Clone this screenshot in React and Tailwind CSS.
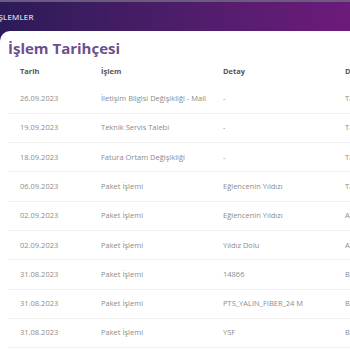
const rows = [
  ["26.09.2023", "İletişim Bilgisi Değişikliği - Mail", "-", "Tamamlandı"],
  ["19.09.2023", "Teknik Servis Talebi", "-", "Tamamlandı"],
  ["18.09.2023", "Fatura Ortam Değişikliği", "-", "Tamamlandı"],
  ["06.09.2023", "Paket İşlemi", "Eğlencenin Yıldızı", "Tamamlandı"],
  ["02.09.2023", "Paket İşlemi", "Eğlencenin Yıldızı", "Aktif"],
  ["02.09.2023", "Paket İşlemi", "Yıldız Dolu", "Aktif"],
  ["31.08.2023", "Paket İşlemi", "14866", "Bitti"],
  ["31.08.2023", "Paket İşlemi", "PTS_YALIN_FIBER_24 M", "Bitti"],
  ["31.08.2023", "Paket İşlemi", "YSF", "Bitti"],
];

export default function App() {
  return (
    <div
      className="w-[350px] h-[350px] overflow-hidden bg-white"
      style={{ fontFamily: "'Open Sans', 'Noto Sans', sans-serif" }}
    >
      <div className="h-[2px] bg-[#6c5b80]" />
      <div className="h-[29px] bg-gradient-to-r from-[#2c1b58] to-[#6d1a7b] flex items-center">
        <span className="text-white text-[8px] font-medium tracking-[0.2px] ml-[-4px]">
          İŞLEMLER
        </span>
      </div>
      <div className="bg-[#2c1b58]">
        <div className="bg-white rounded-tl-[10px] pl-2 pt-[5px]">
          <h1 className="text-[#6e4f8c] text-[15px] font-bold leading-[24px]">
            İşlem Tarihçesi
          </h1>
          <table className="table-fixed w-[500px] text-[7.5px] border-collapse">
            <colgroup>
              <col className="w-[81px]" />
              <col className="w-[122px]" />
              <col className="w-[122px]" />
              <col className="w-[175px]" />
            </colgroup>
            <thead>
              <tr className="h-[24px]">
                {["Tarih", "İşlem", "Detay", "Durum"].map((h) => (
                  <th key={h} className="text-left font-bold text-[#555] px-3 align-middle">
                    {h}
                  </th>
                ))}
              </tr>
            </thead>
            <tbody>
              {rows.map((r, i) => (
                <tr key={i} className="h-[29.3px] border-b border-[#f1f1f1]">
                  {r.map((c, j) => (
                    <td key={j} className="px-3 text-[#8c8c8c] whitespace-nowrap">
                      {c}
                    </td>
                  ))}
                </tr>
              ))}
            </tbody>
          </table>
        </div>
      </div>
    </div>
  );
}
